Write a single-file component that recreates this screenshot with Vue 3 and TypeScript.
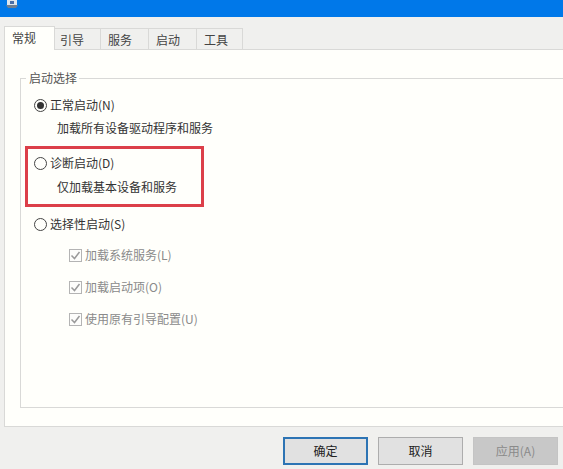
<template>
  <div class="dialog">
    <!-- Title bar, cropped by the screenshot -->
    <header class="titlebar">
      <svg class="titlebar__icon" width="16" height="16" viewBox="0 0 16 16">
        <rect x="3" y="0" width="10" height="6" fill="#dfe6ee" />
        <path d="M2 6h12l-2 3H4z" fill="#6f7f92" />
        <path d="M6 2h4v3H6z" fill="#4a6fa8" />
      </svg>
    </header>

    <!-- Tabs -->
    <nav class="tabs">
      <span
        v-for="(tab, i) in tabs"
        :key="tab"
        class="tabs__item"
        :class="{ 'tabs__item--active': i === 0, 'tabs__item--narrow': i === 1 || i === 4 }"
      >
        {{ tab }}
      </span>
    </nav>

    <!-- Page -->
    <main class="page">
      <fieldset class="group">
        <legend class="group__title">启动选择</legend>

        <div class="option">
          <label class="radio">
            <span class="radio__mark radio__mark--on"></span>
            正常启动(N)
          </label>
          <p class="option__desc">加载所有设备驱动程序和服务</p>
        </div>

        <div class="option option--marked">
          <label class="radio">
            <span class="radio__mark"></span>
            诊断启动(D)
          </label>
          <p class="option__desc">仅加载基本设备和服务</p>
        </div>

        <div class="option option--select">
          <label class="radio">
            <span class="radio__mark"></span>
            选择性启动(S)
          </label>
          <ul class="checks">
            <li v-for="item in checks" :key="item" class="checks__item">
              <svg class="checks__box" width="13" height="13" viewBox="0 0 13 13">
                <rect x="0.5" y="0.5" width="12" height="12" fill="#fdfdfb" stroke="#b4b4b4" />
                <path d="M2.5 6.5l3 3 5-6.5" fill="none" stroke="#9a9a9a" stroke-width="1.5" />
              </svg>
              {{ item }}
            </li>
          </ul>
        </div>
      </fieldset>
    </main>

    <!-- Buttons -->
    <footer class="actions">
      <button class="btn btn--default" type="button">确定</button>
      <button class="btn" type="button">取消</button>
      <button class="btn btn--disabled" type="button" disabled>应用(A)</button>
    </footer>
  </div>
</template>

<script setup lang="ts">
const tabs: string[] = ['常规', '引导', '服务', '启动', '工具'];

const checks: string[] = ['加载系统服务(L)', '加载启动项(O)', '使用原有引导配置(U)'];
</script>

<style scoped>
.dialog {
  width: 563px;
  height: 469px;
  display: flex;
  flex-direction: column;
  overflow: hidden;
  background: #f0f0ee;
  color: #333;
  font-family: 'Noto Sans CJK SC', 'Liberation Sans', sans-serif;
  font-size: 12px;
  line-height: 16px;
}

/* Title bar */
.titlebar {
  flex: none;
  height: 17px;
  background: #0078e9;
  overflow: hidden;
}

.titlebar__icon {
  display: block;
  margin: -1px 0 0 4px;
}

/* Tabs */
.tabs {
  flex: none;
  height: 33px;
  display: flex;
  align-items: flex-end;
  padding-left: 4px;
  margin-bottom: -1px;
  position: relative;
  z-index: 1;
}

.tabs__item {
  width: 48px;
  height: 22px;
  box-sizing: border-box;
  padding: 3px 0 0 7px;
  border: 1px solid #d9d9d7;
  border-left: 0;
  border-bottom-color: #d9d9d7;
  background: #f0f0ee;
  color: #444;
}

.tabs__item--narrow {
  width: 46px;
}

.tabs__item--active {
  width: 51px;
  height: 24px;
  padding: 3px 0 0 7px;
  border-left: 1px solid #d9d9d7;
  border-bottom: 0;
  background: #fffffb;
}

.tabs__item--active + .tabs__item {
  padding-left: 5px;
}

/* Page */
.page {
  flex: 1;
  min-height: 0;
  box-sizing: border-box;
  margin-left: 4px;
  padding: 20px 0 18px 15px;
  border-top: 1px solid #d9d9d7;
  border-left: 1px solid #d9d9d7;
  border-bottom: 1px solid #d9d9d7;
  background: #fffffb;
}

.group {
  height: 100%;
  box-sizing: border-box;
  margin: 0 -8px 0 0;
  padding: 11px 0 0 5px;
  border: 1px solid #d9d9d7;
  border-right: 0;
  min-width: 0;
}

.group__title {
  margin-left: 0;
  padding: 0 2px 0 3px;
  color: #555;
}

/* Options */
.option {
  width: 173px;
  box-sizing: border-box;
  padding: 0 0 0 8px;
}

.option--marked {
  width: 179px;
  height: 61px;
  margin: 10px 0 0 -1px;
  padding: 6px 0 0 6px;
  border: 3px solid #dc3f49;
}

.option--marked .option__desc {
  margin-top: 8px;
}

.option--select {
  margin-top: 9px;
}

.option__desc {
  margin: 7px 0 0 23px;
  white-space: nowrap;
}

.radio {
  display: flex;
  align-items: center;
  gap: 3px;
  white-space: nowrap;
}

.radio__mark {
  position: relative;
  width: 13px;
  height: 13px;
  box-sizing: border-box;
  border: 1px solid #444;
  border-radius: 50%;
  background: #fffffb;
}

.radio__mark--on::after {
  content: '';
  position: absolute;
  inset: 2px;
  border-radius: 50%;
  background: #333;
}

.checks {
  list-style: none;
  margin: 15px 0 0 35px;
  padding: 0;
  display: flex;
  flex-direction: column;
  gap: 16px;
}

.checks__item {
  display: flex;
  align-items: center;
  gap: 3px;
  white-space: nowrap;
  color: #8a8a8a;
}

.checks__box {
  flex: none;
}

/* Buttons */
.actions {
  flex: none;
  height: 42px;
  box-sizing: border-box;
  display: flex;
  justify-content: flex-end;
  gap: 10px;
  padding: 10px 5px 0 0;
}

.btn {
  width: 85px;
  height: 28px;
  padding: 0;
  box-sizing: border-box;
  border: 1px solid #adadad;
  border-radius: 0;
  background: #e1e1e1;
  color: #222;
  font: inherit;
}

.btn--default {
  border: 2px solid #2d74b4;
}

.btn--disabled {
  border-color: #c4c4c4;
  background: #c8c8c8;
  color: #8a8a8a;
}
</style>

<style>
html,
body {
  margin: 0;
  background: #f0f0ee;
}
</style>
